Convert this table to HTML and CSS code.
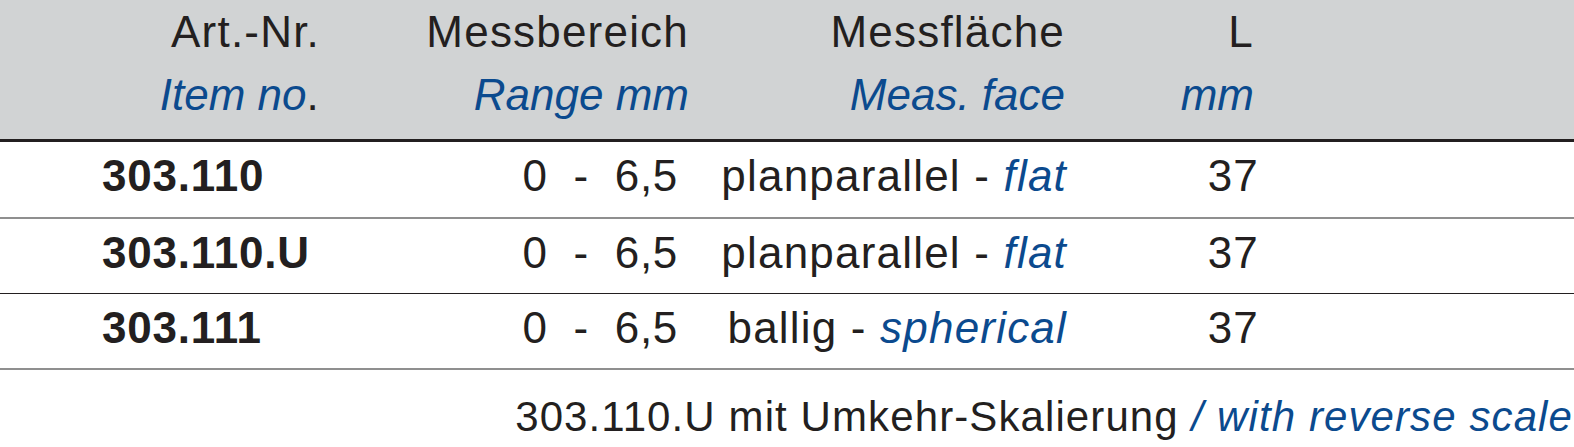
FILE: index.html
```html
<!DOCTYPE html>
<html lang="de">
<head>
<meta charset="utf-8">
<title>Messuhren</title>
<link rel="stylesheet" href="styles.css">
</head>
<body>
<div class="table">
  <div class="row head">
    <div class="c1"><div>Art.-Nr.</div><div><em>Item no</em>.</div></div>
    <div class="c2"><div>Messbereich</div><div><em>Range mm</em></div></div>
    <div class="c3"><div>Messfläche</div><div><em>Meas. face</em></div></div>
    <div class="c4"><div>L</div><div><em>mm</em></div></div>
    <div></div>
  </div>
  <div class="row data first">
    <div class="c1"><b>303.110</b></div>
    <div class="c2">0&nbsp; -&nbsp; 6,5</div>
    <div class="c3">planparallel - <em>flat</em></div>
    <div class="c4">37</div>
    <div></div>
  </div>
  <div class="row data second">
    <div class="c1"><b>303.110.U</b></div>
    <div class="c2">0&nbsp; -&nbsp; 6,5</div>
    <div class="c3">planparallel - <em>flat</em></div>
    <div class="c4">37</div>
    <div></div>
  </div>
  <div class="row data third">
    <div class="c1"><b>303.111</b></div>
    <div class="c2">0&nbsp; -&nbsp; 6,5</div>
    <div class="c3">ballig - <em>spherical</em></div>
    <div class="c4">37</div>
    <div></div>
  </div>
</div>
<p class="note">303.110.U mit Umkehr-Skalierung <em>/ with reverse scale</em></p>
</body>
</html>
```
FILE: styles.css
```css
html, body {
  margin: 0;
  padding: 0;
  background: #ffffff;
}
body {
  width: 1574px;
  height: 447px;
  overflow: hidden;
  font-family: "Liberation Sans", Arial, sans-serif;
  color: #231f20;
}
em {
  color: #0b4a8e;
  font-style: italic;
}
.row {
  display: grid;
  grid-template-columns: 322px 368px 378px 192px 1fr;
  font-size: 44px;
  letter-spacing: 1.2px;
}
.head {
  background: #d1d3d4;
  line-height: 63px;
  padding-bottom: 13px;
  border-bottom: 3px solid #231f20;
  text-align: right;
}
.head em {
  letter-spacing: 0;
}
.head .c1 { padding-right: 2px; }
.head .c2 { padding-right: 1px; }
.head .c3 { padding-right: 3px; }
.head .c4 { padding-right: 6px; }
.data {
  line-height: 68px;
  padding-bottom: 6px;
}
.data.first {
  padding-bottom: 7px;
  border-bottom: 2px solid #8f8f8f;
}
.data.second {
  border-bottom: 1px solid #231f20;
}
.data.third {
  border-bottom: 2px solid #8f8f8f;
}
.data .c1 {
  padding-left: 102px;
}
.data .c1 b {
  font-weight: 700;
  letter-spacing: 0.8px;
}
.data .c2 {
  text-align: right;
  padding-right: 12px;
  letter-spacing: 0.7px;
}
.data .c3 {
  text-align: right;
  padding-right: 1px;
}
.data .c4 {
  text-align: right;
  padding-right: 1px;
}
.note {
  margin: 0;
  padding: 17px 1px 0 0;
  font-size: 42px;
  line-height: 60px;
  letter-spacing: 1.1px;
  text-align: right;
  white-space: nowrap;
}
```
